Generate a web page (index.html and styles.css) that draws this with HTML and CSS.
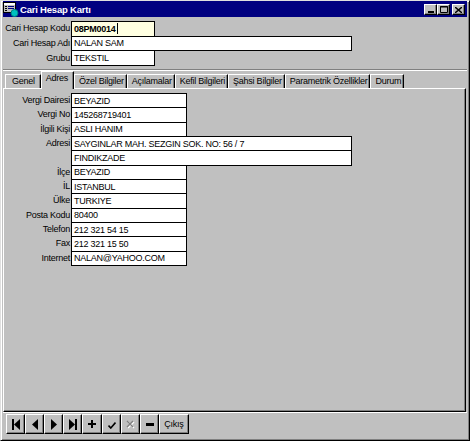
FILE: index.html
```html
<!DOCTYPE html>
<html lang="tr">

<head>
    <meta charset="UTF-8">
    <title>Cari Hesap Kartı</title>
    <link rel="stylesheet" href="styles.css">
</head>

<body>
    <div class="window">
        <div class="title-bar">
            <svg class="title-icon" width="16" height="16" viewBox="0 0 16 16">
                <rect x="0.5" y="1.5" width="12" height="10" fill="#c0c0c0" stroke="#000"/>
                <rect x="1" y="2" width="11" height="2" fill="#fff"/>
                <rect x="2" y="5" width="2" height="1" fill="#000"/>
                <rect x="5" y="5" width="6" height="1" fill="#000080"/>
                <rect x="2" y="7" width="2" height="1" fill="#000"/>
                <rect x="5" y="7" width="6" height="1" fill="#000080"/>
                <rect x="2" y="9" width="2" height="1" fill="#000"/>
                <circle cx="11.5" cy="12" r="3.5" fill="#00c0c0" stroke="#008080"/>
            </svg>
            <span class="title-text">Cari Hesap Kartı</span>
            <div class="title-buttons">
                <div class="tb-btn">
                    <svg width="6" height="7" viewBox="0 0 6 7"><rect x="0" y="5" width="6" height="2"/></svg>
                </div>
                <div class="tb-btn">
                    <svg width="8" height="7" viewBox="0 0 8 7"><path d="M0.5 0.5h7v6h-7z M0 1h8" fill="none" stroke="#000"/></svg>
                </div>
                <div class="tb-btn close">
                    <svg width="7" height="6" viewBox="0 0 7 6"><path d="M0 0L7 6M7 0L0 6" stroke="#000" stroke-width="1.4"/></svg>
                </div>
            </div>
        </div>

        <div class="header-form">
            <label>Cari Hesap Kodu</label>
            <div class="field short code">08PM0014<span class="caret"></span></div>
            <label>Cari Hesap Adı</label>
            <div class="field long">NALAN SAM</div>
            <label>Grubu</label>
            <div class="field short">TEKSTIL</div>
        </div>

        <div class="separator"></div>

        <div class="tabs">
            <div class="tab">Genel</div>
            <div class="tab active">Adres</div>
            <div class="tab">Özel Bilgiler</div>
            <div class="tab">Açılamalar</div>
            <div class="tab">Kefil Bilgileri</div>
            <div class="tab">Şahsi Bilgiler</div>
            <div class="tab">Parametrik Özellikler</div>
            <div class="tab">Durum</div>
        </div>

        <div class="tab-panel">
            <div class="address-form">
                <label>Vergi Dairesi</label>
                <div class="field medium">BEYAZID</div>
                <label>Vergi No</label>
                <div class="field medium">145268719401</div>
                <label>İlgili Kişi</label>
                <div class="field medium">ASLI HANIM</div>
                <label>Adresi</label>
                <div class="field long">SAYGINLAR MAH. SEZGIN SOK. NO: 56 / 7</div>
                <label></label>
                <div class="field long">FINDIKZADE</div>
                <label>İlçe</label>
                <div class="field medium">BEYAZID</div>
                <label>İL</label>
                <div class="field medium">ISTANBUL</div>
                <label>Ülke</label>
                <div class="field medium">TURKIYE</div>
                <label>Posta Kodu</label>
                <div class="field medium">80400</div>
                <label>Telefon</label>
                <div class="field medium">212 321 54 15</div>
                <label>Fax</label>
                <div class="field medium">212 321 15 50</div>
                <label>Internet</label>
                <div class="field medium">NALAN@YAHOO.COM</div>
            </div>
        </div>

        <div class="toolbar">
            <div class="nav-btn">
                <svg width="8" height="11" viewBox="0 0 8 11"><rect x="0" y="0" width="2" height="11"/><polygon points="8,0 2,5.5 8,11"/></svg>
            </div>
            <div class="nav-btn">
                <svg width="6" height="11" viewBox="0 0 6 11"><polygon points="6,0 0,5.5 6,11"/></svg>
            </div>
            <div class="nav-btn">
                <svg width="6" height="11" viewBox="0 0 6 11"><polygon points="0,0 6,5.5 0,11"/></svg>
            </div>
            <div class="nav-btn">
                <svg width="8" height="11" viewBox="0 0 8 11"><polygon points="0,0 6,5.5 0,11"/><rect x="6" y="0" width="2" height="11"/></svg>
            </div>
            <div class="nav-btn wide">
                <svg width="8" height="8" viewBox="0 0 8 8"><rect x="0" y="3" width="8" height="2"/><rect x="3" y="0" width="2" height="8"/></svg>
            </div>
            <div class="nav-btn">
                <svg class="check" width="8" height="7" viewBox="0 0 8 7"><path d="M0.5 3.5L2.8 6L7.5 0.5" fill="none" stroke="#000" stroke-width="1.6"/></svg>
            </div>
            <div class="nav-btn disabled">
                <svg width="9" height="9" viewBox="0 0 9 9">
                    <path d="M2 2L8 8M8 2L2 8" stroke="#fff" stroke-width="1.3"/>
                    <path d="M1 1L7 7M7 1L1 7" stroke="#808080" stroke-width="1.3"/>
                </svg>
            </div>
            <div class="nav-btn">
                <svg width="8" height="3" viewBox="0 0 8 3"><rect x="0" y="0" width="8" height="3"/></svg>
            </div>
            <div class="nav-btn exit">Çıkış</div>
        </div>
    </div>
</body>

</html>
```

FILE: styles.css
```css
* {
    margin: 0;
    padding: 0;
    box-sizing: border-box;
}

body {
    width: 470px;
    height: 441px;
    overflow: hidden;
    background: #c0c0c0;
    color: #000;
    font-family: "Liberation Sans", Arial, sans-serif;
    font-size: 9px;
    letter-spacing: -0.25px;
}

.window {
    width: 470px;
    height: 441px;
    display: flex;
    flex-direction: column;
    padding: 0 2px 3px 2px;
    border: 1px solid;
    border-color: #dfdfdf #000 #000 #dfdfdf;
    box-shadow: inset 1px 1px #fff, inset -1px -1px #808080;
    background: #c0c0c0;
}

/* title bar */
.title-bar {
    height: 16px;
    flex-shrink: 0;
    display: flex;
    align-items: center;
    padding-right: 2px;
    background: #000080;
    color: #fff;
}

.title-icon {
    flex-shrink: 0;
}

.title-text {
    margin-left: 1px;
    font-size: 9.5px;
    font-weight: bold;
    letter-spacing: -0.2px;
}

.title-buttons {
    margin-left: auto;
    display: flex;
    margin-top: 1px;
}

.tb-btn {
    width: 13px;
    height: 11px;
    display: flex;
    align-items: center;
    justify-content: center;
    background: #c0c0c0;
    border: 1px solid;
    border-color: #fff #000 #000 #fff;
    box-shadow: inset -1px -1px #808080;
}

.tb-btn.close {
    margin-left: 2px;
}

/* fields */
.header-form,
.address-form {
    display: grid;
    flex-shrink: 0;
}

.header-form {
    padding-top: 4px;
    grid-template-columns: 68px auto;
    grid-auto-rows: 14.67px;
}

.address-form {
    grid-template-columns: 67px auto;
    grid-auto-rows: 14.33px;
}

label {
    display: flex;
    align-items: center;
    justify-content: flex-end;
    padding-right: 1px;
    white-space: nowrap;
}

.field {
    height: calc(100% + 1px);
    display: flex;
    align-items: center;
    padding-left: 2px;
    background: #fff;
    border: 1px solid #000;
    white-space: nowrap;
    overflow: hidden;
}

.field.short {
    width: 84px;
}

.field.medium {
    width: 116px;
}

.field.long {
    width: 281px;
}

.field.code {
    background: #ffffe1;
    font-weight: bold;
}

.caret {
    width: 1px;
    height: 11px;
    margin-left: 1px;
    background: #000;
}

.separator {
    flex-shrink: 0;
    height: 2px;
    margin-top: 4px;
    border-top: 1px solid #808080;
    border-bottom: 1px solid #fff;
}

/* tabs */
.tabs {
    flex-shrink: 0;
    height: 17px;
    display: flex;
    align-items: flex-end;
    padding-left: 2px;
    position: relative;
    z-index: 1;
}

.tab {
    height: 14px;
    padding: 0 2px 0 4px;
    line-height: 12px;
    white-space: nowrap;
    border-top: 1px solid #fff;
    border-left: 1px solid #fff;
    border-right: 1px solid #000;
    box-shadow: inset -1px 0 #808080;
    background: #c0c0c0;
}

.tab:first-child {
    padding: 0 5px 0 6px;
}

.tab.active {
    height: 18px;
    margin-bottom: -1px;
    padding: 0 5px 0 4px;
    line-height: 13px;
}

.tab-panel {
    flex: 1;
    margin-right: 1px;
    padding-top: 4px;
    border: 1px solid;
    border-color: #fff #000 #000 #fff;
    box-shadow: inset -1px -1px #808080;
}

/* bottom navigator */
.toolbar {
    flex-shrink: 0;
    height: 25px;
    display: flex;
    align-items: flex-start;
    padding: 1px 0 0 3px;
    border-top: 1px solid #fff;
}

.nav-btn {
    width: 19px;
    height: 20px;
    display: flex;
    align-items: center;
    justify-content: center;
    background: #c0c0c0;
    border: 1px solid;
    border-color: #fff #000 #000 #fff;
    box-shadow: inset -1px -1px #808080;
}

.nav-btn.wide {
    width: 20px;
}

.nav-btn .check {
    margin-top: 3px;
}

.nav-btn.exit {
    width: 30px;
}
```
